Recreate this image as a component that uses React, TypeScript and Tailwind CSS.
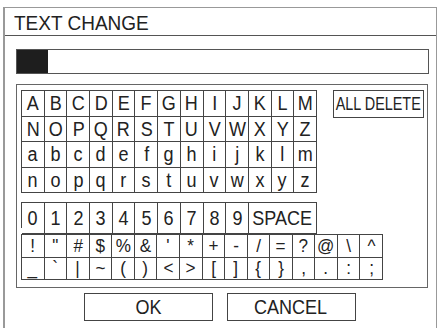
const letterRows = ["ABCDEFGHIJKLM", "NOPQRSTUVWXYZ", "abcdefghijklm", "nopqrstuvwxyz"]
const digits = "0123456789".split("")
const symbolRows = [
  ["!", "\"", "#", "$", "%", "&", "'", "*", "+", "-", "/", "=", "?", "@", "\\", "^"],
  ["_", "`", "|", "~", "(", ")", "<", ">", "[", "]", "{", "}", ",", ".", ":", ";"]
]

function Cell({ label, className = "" }: { label: string; className?: string }) {
  return (
    <div className={`flex items-center justify-center border-r border-b border-[#444] ${className}`}>
      <span className="scale-x-90">{label}</span>
    </div>
  )
}

export default function App() {
  return (
    <div
      className="w-[437px] h-[328px] overflow-hidden bg-white text-[#222]"
      style={{ fontFamily: '"Liberation Sans", Arial, sans-serif' }}
    >
      <div className="ml-[3px] mt-[7px] w-[434px] h-[340px] border-t border-r border-l-2 border-[#999]">
        {/* title */}
        <div className="h-[28px] border-b border-[#555] pl-[9px] pt-[3px] text-[20px] leading-[24px]">
          <span className="inline-block origin-left scale-x-95">TEXT CHANGE</span>
        </div>

        {/* input */}
        <div className="ml-[11px] mt-[13px] w-[413px] h-[25px] border border-[#555] flex">
          <div className="w-[31px] h-full bg-[#1e1e1e]" />
        </div>

        {/* keyboard panel */}
        <div className="ml-[11px] mt-[10px] w-[412px] h-[204px] border border-[#666] pl-[4px] pt-[5px] text-[20px]">
          <div className="flex gap-[16px]">
            <div className="w-[296px] h-[103px] grid grid-cols-[repeat(13,1fr)] grid-rows-4 border-t border-l border-[#444]">
              {letterRows.map(row => row.split("").map(ch => <Cell key={ch} label={ch} />))}
            </div>
            <div className="w-[91px] h-[28px] border border-[#444] flex items-center justify-center text-[18px]">
              <span className="inline-block scale-x-80 whitespace-nowrap">ALL DELETE</span>
            </div>
          </div>

          <div className="mt-[9px] w-[296px] h-[26px] grid grid-cols-[repeat(13,1fr)] border-t border-l border-[#444]">
            {digits.map(d => <Cell key={d} label={d} />)}
            <Cell label="SPACE" className="col-span-3" />
          </div>

          <div className="mt-[6px] w-[362px] h-[46px] grid grid-cols-[repeat(16,1fr)] grid-rows-2 border-t border-l border-[#444] text-[19px]">
            {symbolRows.map((row, r) => row.map((s, i) => <Cell key={`${r}-${i}`} label={s} />))}
          </div>
        </div>

        {/* buttons */}
        <div className="mt-[5px] flex justify-center gap-[14px] pr-[2px] text-[20px]">
          <button className="w-[129px] h-[28px] border border-[#444] flex items-center justify-center">
            <span className="scale-x-90">OK</span>
          </button>
          <button className="w-[129px] h-[28px] border border-[#444] flex items-center justify-center">
            <span className="scale-x-90">CANCEL</span>
          </button>
        </div>
      </div>
    </div>
  )
}
